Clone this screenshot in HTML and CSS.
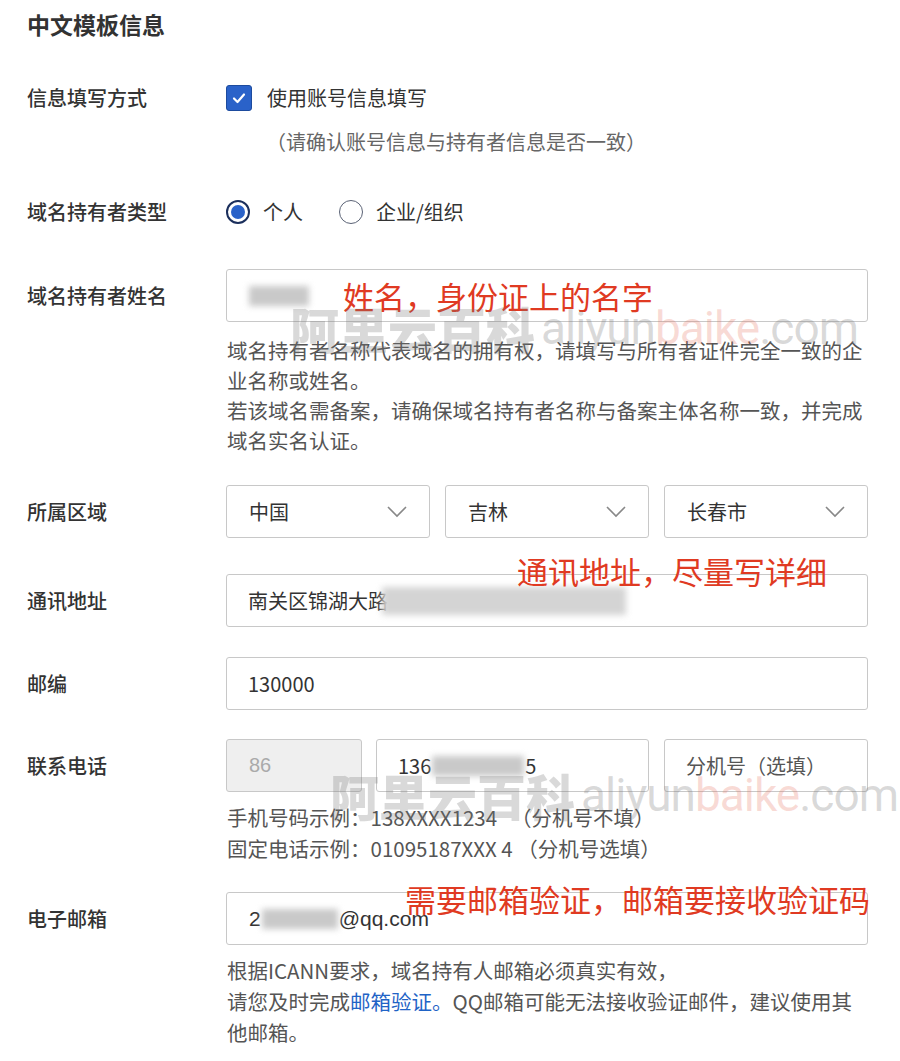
FILE: index.html
```html
<!DOCTYPE html>
<html lang="zh-CN">
<head>
  <meta charset="UTF-8">
  <meta name="viewport" content="width=device-width, initial-scale=1.0">
  <title>中文模板信息</title>
  <link rel="stylesheet" href="styles.css">
</head>
<body>
  <div id="page">
    <h2 class="title">中文模板信息</h2>

    <div class="row row-check">
      <div class="label">信息填写方式</div>
      <div class="field">
        <label class="check">
          <span class="box">
            <svg width="16" height="16" viewBox="0 0 16 16"><polyline points="3,8.5 6.5,12 13,4.5" fill="none" stroke="#fff" stroke-width="2.2" stroke-linecap="round" stroke-linejoin="round"/></svg>
          </span>
          使用账号信息填写
        </label>
      </div>
    </div>
    <div class="row row-note">
      <div class="label"></div>
      <div class="field note">（请确认账号信息与持有者信息是否一致）</div>
    </div>

    <div class="row row-radio">
      <div class="label">域名持有者类型</div>
      <div class="field radios">
        <label class="radio on"><span class="dot"></span>个人</label>
        <label class="radio"><span class="dot"></span>企业/组织</label>
      </div>
    </div>

    <div class="row row-name">
      <div class="label">域名持有者姓名</div>
      <div class="field">
        <div class="input"><span class="blur" style="width:60px"></span></div>
        <div class="help">
          域名持有者名称代表域名的拥有权，请填写与所有者证件完全一致的企业名称或姓名。<br>
          若该域名需备案，请确保域名持有者名称与备案主体名称一致，并完成域名实名认证。
        </div>
      </div>
    </div>

    <div class="row row-region">
      <div class="label">所属区域</div>
      <div class="field selects">
        <div class="input select">中国<svg width="20" height="12" viewBox="0 0 20 12"><polyline points="1,1 10,10 19,1" fill="none" stroke="#888" stroke-width="1.6"/></svg></div>
        <div class="input select">吉林<svg width="20" height="12" viewBox="0 0 20 12"><polyline points="1,1 10,10 19,1" fill="none" stroke="#888" stroke-width="1.6"/></svg></div>
        <div class="input select">长春市<svg width="20" height="12" viewBox="0 0 20 12"><polyline points="1,1 10,10 19,1" fill="none" stroke="#888" stroke-width="1.6"/></svg></div>
      </div>
    </div>

    <div class="row row-addr">
      <div class="label">通讯地址</div>
      <div class="field">
        <div class="input">南关区锦湖大路<span class="blur wide" style="width:244px"></span></div>
      </div>
    </div>

    <div class="row row-zip">
      <div class="label">邮编</div>
      <div class="field">
        <div class="input">130000</div>
      </div>
    </div>

    <div class="row row-phone">
      <div class="label">联系电话</div>
      <div class="field">
        <div class="phones">
          <div class="input code">86</div>
          <div class="input num">136<span class="blur" style="width:92px"></span>5</div>
          <div class="input ext">分机号（选填）</div>
        </div>
        <div class="help tight">
          手机号码示例：138XXXX1234 &nbsp;&nbsp;（分机号不填）<br>
          固定电话示例：01095187XXX 4 （分机号选填）
        </div>
      </div>
    </div>

    <div class="row row-mail">
      <div class="label">电子邮箱</div>
      <div class="field">
        <div class="input mail">2<span class="blur" style="width:76px"></span>@qq.com</div>
        <div class="help tight">
          根据ICANN要求，域名持有人邮箱必须真实有效，<br>
          请您及时完成<a class="link">邮箱验证。</a>QQ邮箱可能无法接收验证邮件，建议使用其他邮箱。
        </div>
      </div>
    </div>

    <div class="note-red n1">姓名，身份证上的名字</div>
    <div class="note-red n2">通讯地址，尽量写详细</div>
    <div class="note-red n3">需要邮箱验证，邮箱要接收验证码</div>

    <div class="mark m1"><span class="cn">阿里云百科</span><span class="en">aliyun<em>baike</em>.com</span></div>
    <div class="mark m2"><span class="cn">阿里云百科</span><span class="en">aliyun<em>baike</em>.com</span></div>
  </div>
</body>
</html>
```

FILE: styles.css
```css
html, body {
  margin: 0;
  padding: 0;
  background: #fff;
  font-family: "Noto Sans CJK SC", "Noto Sans", sans-serif;
  color: #333;
}
#page {
  position: relative;
  width: 900px;
  height: 1061px;
  padding: 8px 0 0 27px;
  box-sizing: border-box;
  overflow: hidden;
}
.title {
  margin: 0;
  font-size: 23px;
  line-height: 32px;
  font-weight: 700;
  color: #333;
}
.row {
  display: flex;
  align-items: flex-start;
}
.label {
  width: 199px;
  flex: none;
  font-size: 20px;
  line-height: 53px;
  font-weight: 500;
  color: #333;
}
.field {
  width: 642px;
  font-size: 20px;
}
.row-check { margin-top: 43px; height: 30px; }
.row-check .label, .row-radio .label { line-height: 30px; }
.row-note { margin-top: 14px; }
.row-radio { margin-top: 40px; height: 30px; }
.row-name { margin-top: 42px; }
.row-region { margin-top: 30px; }
.row-addr { margin-top: 36px; }
.row-zip { margin-top: 30px; }
.row-phone { margin-top: 29px; }
.row-mail { margin-top: 28px; }

.check {
  display: flex;
  align-items: center;
  gap: 15px;
  line-height: 30px;
  color: #333;
}
.box {
  width: 26px;
  height: 26px;
  border-radius: 3px;
  background: #2a62c9;
  border: 1px solid #1d4b9e;
  box-sizing: border-box;
  display: flex;
  align-items: center;
  justify-content: center;
}
.note {
  font-size: 20px;
  line-height: 30px;
  color: #666;
  padding-left: 40px;
}
.radios {
  display: flex;
  gap: 36px;
  line-height: 30px;
}
.radio {
  display: flex;
  align-items: center;
  gap: 13px;
}
.dot {
  width: 24px;
  height: 24px;
  border-radius: 50%;
  border: 1.5px solid #5a6275;
  box-sizing: border-box;
  position: relative;
}
.radio.on .dot {
  border: 2px solid #1b2f5c;
}
.radio.on .dot::after {
  content: "";
  position: absolute;
  left: 3px;
  top: 3px;
  width: 14px;
  height: 14px;
  border-radius: 50%;
  background: #2a62c9;
}
.input {
  height: 53px;
  border: 1px solid #c8c8c8;
  border-radius: 3px;
  box-sizing: border-box;
  padding: 0 21px;
  display: flex;
  align-items: center;
  font-size: 20px;
  color: #333;
  font-family: "Noto Sans CJK SC", "Liberation Sans", sans-serif;
}
.blur {
  display: inline-block;
  height: 20px;
  background: #c9c9c9;
  filter: blur(3px);
  margin: 0 1px;
}
.blur.wide { height: 28px; background: #d4d4d4; margin-left: -6px; }
.help {
  margin-top: 13px;
  font-size: 20.5px;
  line-height: 30px;
  color: #555;
  padding-left: 1px;
}
.help.tight {
  margin-top: 10px;
  line-height: 31px;
}
.selects {
  display: flex;
  gap: 15px;
}
.select {
  width: 204px;
  justify-content: space-between;
  padding: 0 22px 0 22px;
}
.phones {
  display: flex;
  gap: 14px;
}
.code {
  width: 136px;
  background: #efefef;
  color: #aaa;
  font-family: "Liberation Sans", sans-serif;
  padding-left: 22px;
}
.num { width: 273px; }
.ext { width: 204px; margin-left: 1px; color: #555; }
.mail { font-family: "Liberation Sans", sans-serif; font-size: 21px; padding-left: 22px; }
.link { color: #1f63c6; }

.note-red {
  position: absolute;
  font-size: 31px;
  line-height: 40px;
  color: #e03a22;
  white-space: nowrap;
}
.n1 { left: 343px; top: 276px; }
.n2 { left: 517px; top: 551px; }
.n3 { left: 405px; top: 879px; }

.mark {
  position: absolute;
  display: flex;
  align-items: center;
  gap: 6px;
  white-space: nowrap;
  pointer-events: none;
}
.mark .cn {
  font-size: 49px;
  font-weight: 900;
  color: rgba(120, 120, 120, 0.28);
  letter-spacing: 0;
}
.mark .en {
  font-family: Roboto, sans-serif;
  font-size: 46px;
  font-weight: 400;
  color: rgba(120, 120, 120, 0.28);
  letter-spacing: -1px;
}
.mark .en em {
  font-style: normal;
  color: rgba(230, 110, 90, 0.25);
}
.m1 { left: 290px; top: 292px; }
.m2 { left: 330px; top: 759px; }
```
